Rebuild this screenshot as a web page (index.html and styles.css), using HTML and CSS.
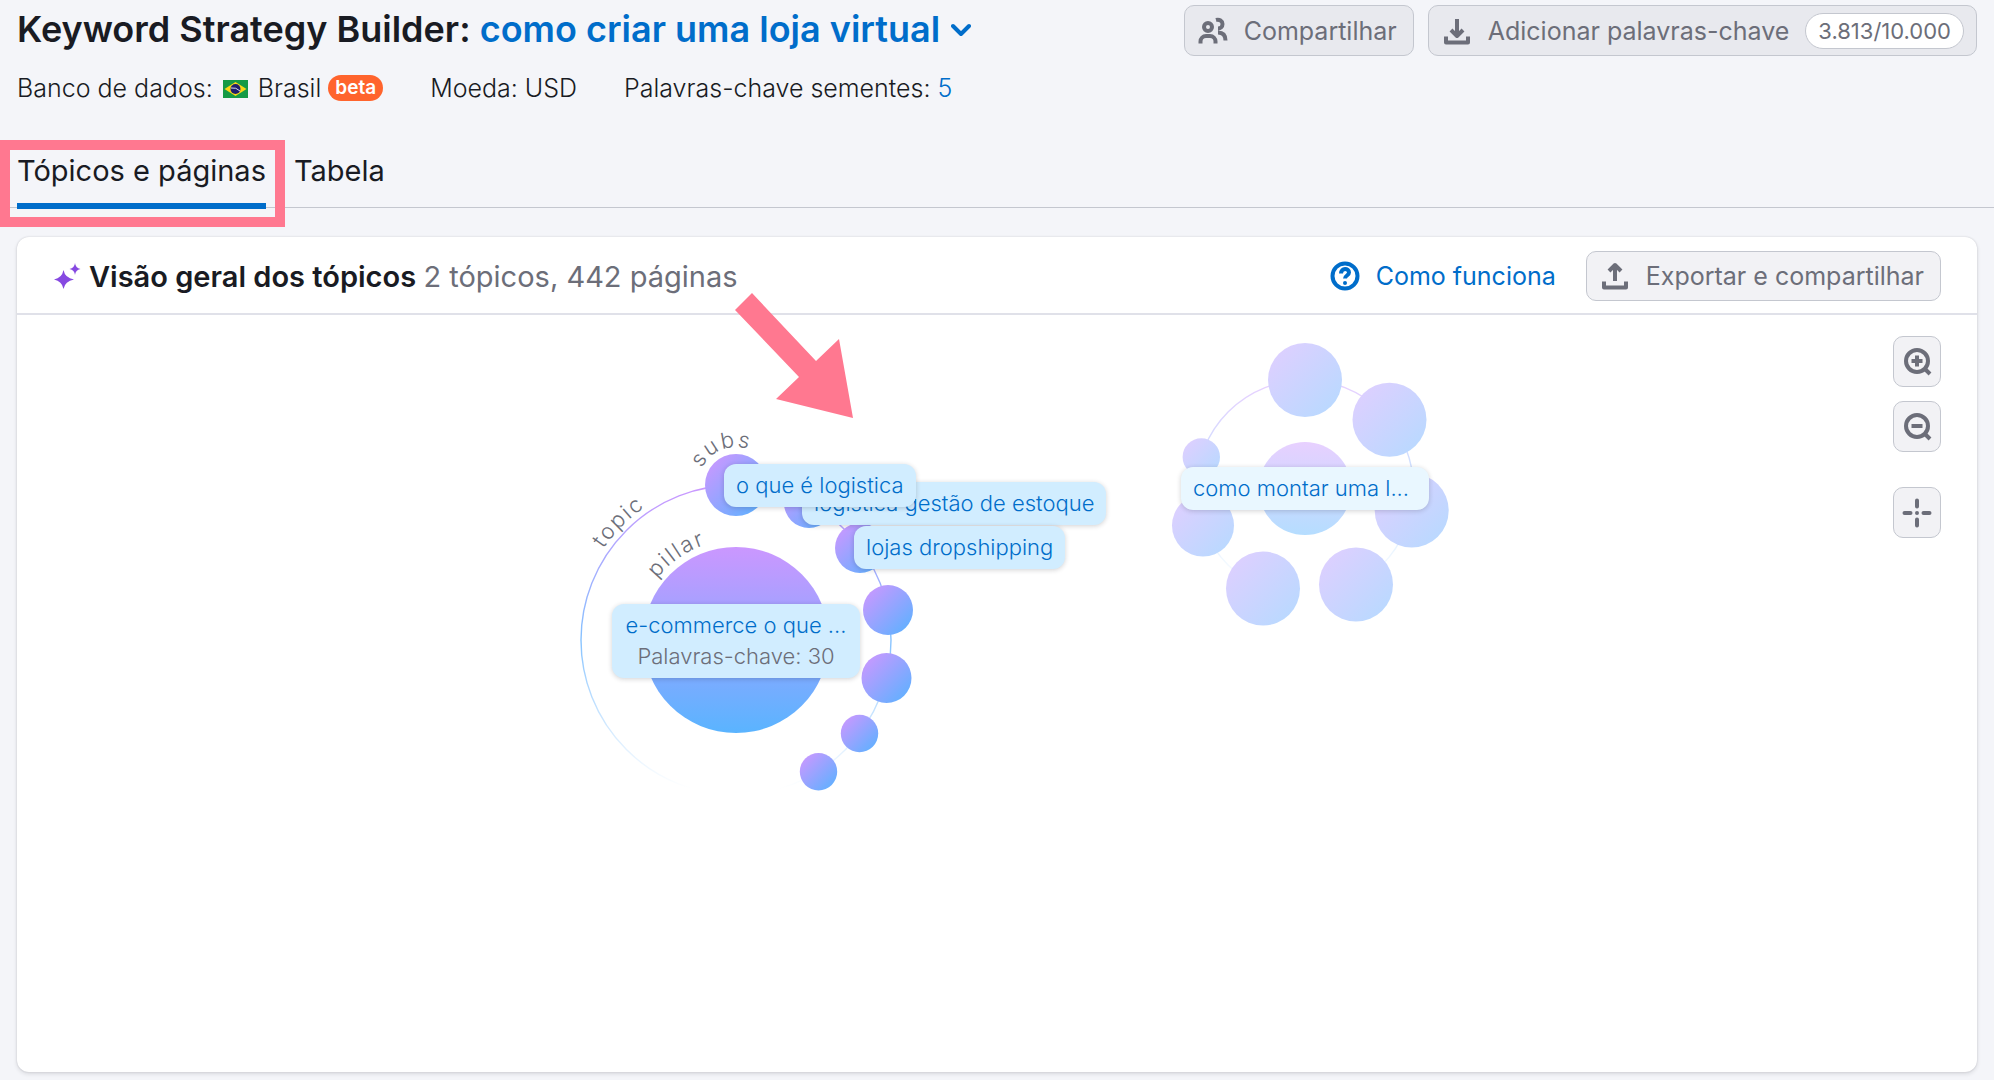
FILE: index.html
```html
<!DOCTYPE html>
<html lang="pt-BR">
<head>
<meta charset="utf-8">
<meta name="viewport" content="width=device-width, initial-scale=1">
<title>Keyword Strategy Builder</title>
<link rel="stylesheet" href="styles.css">
</head>
<body>
<header class="page-header">
  <div class="title-row">
    <h1 class="title">Keyword Strategy Builder:
      <button class="title-picker" type="button">como criar uma loja virtual
        <svg class="chevron" width="20" height="14" viewBox="0 0 20 14" aria-hidden="true"><path d="M2 3l8 8 8-8"/></svg>
      </button>
    </h1>
    <div class="actions">
      <button class="btn btn-dim" type="button">
        <svg class="icon" width="30" height="30" viewBox="0 0 30 30" aria-hidden="true"><circle cx="10" cy="11" r="4"/><path d="M2.500 27.500v-2a5.500 5.500 0 0 1 5.500-5.500h4a5.500 5.500 0 0 1 5.500 5.500v2M18 4c3.500-1 6.500 1 6.500 4s-2 4.500-4.500 4.500M20 16.500c5 0 7.500 2.500 7.500 8"/></svg>
        Compartilhar
      </button>
      <button class="btn btn-dim btn-counted" type="button">
        <svg class="icon" width="30" height="30" viewBox="0 0 30 30" aria-hidden="true"><path d="M15 3v15M9 14l6 6 6-6M4 20.500v6h22v-6"/></svg>
        Adicionar palavras-chave
        <span class="counter">3.813/10.000</span>
      </button>
    </div>
  </div>
  <div class="info-row">
    <div class="info">Banco de dados:
      <svg class="flag" width="25" height="18" viewBox="0 0 25 18" role="img" aria-label="Bandeira do Brasil"><rect width="25" height="18" fill="#159a46"/><path d="M1.500 9 12.500 2 23.500 9 12.500 16Z" fill="#f9d616"/><circle cx="12.500" cy="9" r="5" fill="#1f1e6c"/><path d="M8 8q5-1 9 3" fill="none" stroke="#d8dcee"/></svg>
      Brasil <span class="badge">beta</span></div>
    <div class="info">Moeda: USD</div>
    <div class="info">Palavras-chave sementes: <a href="#sementes">5</a></div>
  </div>
  <nav class="tabs">
    <a class="tab tab-active" href="#topicos">Tópicos e páginas</a>
    <a class="tab" href="#tabela">Tabela</a>
  </nav>
</header>

<main class="panel">
  <div class="panel-header">
    <svg class="sparkle" width="28" height="28" viewBox="0 0 28 28" aria-hidden="true"><path d="M10.500 8Q12 16 21 17.500 12 19 10.500 27 9 19 1 17.500 9 16 10.500 8ZM22 1Q22.500 6 27.500 7 22.500 8 22 13 21.500 8 16.500 7 21.500 6 22 1Z"/></svg>
    <h2 class="panel-title">Visão geral dos tópicos <span>2 tópicos, 442 páginas</span></h2>
    <a class="help" href="#como-funciona">
      <svg class="icon" width="30" height="30" viewBox="0 0 30 30" aria-hidden="true"><circle cx="15" cy="15" r="12.500"/><path d="M11 12.500c0-6 8-5.500 8-1 0 3-4 3-4 6"/><circle class="dot" cx="15" cy="22" r="2"/></svg>
      Como funciona</a>
    <button class="btn" type="button">
      <svg class="icon" width="30" height="30" viewBox="0 0 30 30" aria-hidden="true"><path d="M15 20V5M9 10l6-6 6 6M4 20.500v6h22v-6"/></svg>
      Exportar e compartilhar
    </button>
  </div>

  <div class="canvas">
    <div class="map">
      <svg class="graph" width="1000" height="500" viewBox="0 0 1000 500" aria-hidden="true">
        <defs>
          <linearGradient id="pillar" x1="0" y1="0" x2="0" y2="1"><stop offset="0" stop-color="#cb97ff"/><stop offset="1" stop-color="#5ab4ff"/></linearGradient>
          <linearGradient id="sub" x1="0.150" y1="0.150" x2="0.900" y2="0.900"><stop offset="0" stop-color="#c19aff"/><stop offset="1" stop-color="#62b0ff"/></linearGradient>
          <linearGradient id="sub-faded" x1="0.150" y1="0.150" x2="0.900" y2="0.900"><stop offset="0" stop-color="#dbd0ff"/><stop offset="1" stop-color="#b9d9ff"/></linearGradient>
          <linearGradient id="ring" x1="0" y1="0" x2="0" y2="1"><stop offset="0" stop-color="#cb97ff"/><stop offset="0.500" stop-color="#86c2ff"/><stop offset="0.980" stop-color="#9bd0ff" stop-opacity="0"/></linearGradient>
          <path id="arc-topic" d="M78 325A161 161 0 0 1 400 325"/>
          <path id="arc-pillar" d="M139 325A100 100 0 0 1 339 325"/>
          <path id="arc-subs" d="M201 170A38 38 0 0 1 277 170"/>
        </defs>
        <g>
          <circle class="ring" cx="239" cy="325" r="155"/>
          <circle fill="url(#pillar)" cx="239" cy="325" r="93"/>
          <g fill="url(#sub)">
            <circle cx="239" cy="170" r="31"/>
            <circle cx="312" cy="188" r="25"/>
            <circle cx="363" cy="233" r="25"/>
            <circle cx="391" cy="295" r="25"/>
            <circle cx="389.500" cy="363" r="25"/>
            <circle cx="362.500" cy="418.500" r="18.700"/>
            <circle cx="321.500" cy="456.700" r="18.700"/>
          </g>
        </g>
        <g class="arc-text">
          <text><textPath href="#arc-topic" startOffset="97">topic</textPath></text>
          <text><textPath href="#arc-pillar" startOffset="66">pillar</textPath></text>
          <text><textPath href="#arc-subs" startOffset="17">subs</textPath></text>
        </g>
        <circle class="ring faded" cx="808" cy="173.500" r="108.500"/>
        <circle class="faded" fill="url(#pillar)" cx="808" cy="173.500" r="46.500"/>
        <g fill="url(#sub-faded)">
          <circle cx="808" cy="65" r="37"/>
          <circle cx="892.500" cy="104.700" r="37"/>
          <circle cx="914.700" cy="195.500" r="37"/>
          <circle cx="859" cy="269.500" r="37"/>
          <circle cx="766" cy="273.500" r="37"/>
          <circle cx="706" cy="210.500" r="31"/>
          <circle cx="704.300" cy="142" r="18.700"/>
        </g>
        <path class="arrow" d="M255-22 319 46 342 24 356 103 279 84 302 62 238-5Z"/>
      </svg>
      <button class="label label-stock" type="button">logistica gestão de estoque</button>
      <button class="label label-logistics" type="button">o que é logistica</button>
      <button class="label label-drop" type="button">lojas dropshipping</button>
      <button class="label label-pillar" type="button">e-commerce o que ...<span>Palavras-chave: 30</span></button>
      <button class="label label-store" type="button">como montar uma l...</button>
    </div>
    <div class="tools">
      <button class="tool" type="button" aria-label="Aumentar zoom"><svg class="icon" width="30" height="30" viewBox="0 0 30 30" aria-hidden="true"><circle cx="15" cy="14" r="11"/><path d="M9.500 14h11M15 8.500v11M23 22l5 5"/></svg></button>
      <button class="tool" type="button" aria-label="Diminuir zoom"><svg class="icon" width="30" height="30" viewBox="0 0 30 30" aria-hidden="true"><circle cx="15" cy="14" r="11"/><path d="M9.500 14h11M23 22l5 5"/></svg></button>
      <button class="tool tool-center" type="button" aria-label="Centralizar"><svg class="icon icon-round" width="30" height="30" viewBox="0 0 30 30" aria-hidden="true"><path d="M15 2.500v6M15 21.500v6M2.500 15h6M21.500 15h6M15 15h0"/></svg></button>
    </div>
  </div>
</main>
</body>
</html>
```
FILE: styles.css
```css
:root {
  --ink: #191b23;
  --muted: #6c6e79;
  --link: #006dca;
  --line: #c4c7cf;
  --mark: #ff7890;
}

* {
  box-sizing: border-box;
}

body {
  margin: 0;
  min-height: 100vh;
  display: flex;
  flex-direction: column;
  background: #f4f5f9;
  color: var(--ink);
  font-family: Inter, "Liberation Sans", sans-serif;
  font-size: 25px;
}

button {
  font: inherit;
  cursor: pointer;
}

a {
  color: var(--link);
  text-decoration: none;
}

.title-row {
  display: flex;
  align-items: flex-start;
  justify-content: space-between;
  padding: 5px 17px 0;
}

.title {
  margin: 0;
  font-size: 36px;
  font-weight: 600;
  line-height: 48px;
}

.title-picker {
  padding: 0;
  border: 0;
  background: none;
  color: var(--link);
}

.chevron {
  margin-left: 2px;
  vertical-align: 5px;
  fill: none;
  stroke: currentColor;
  stroke-width: 4;
  stroke-linecap: round;
  stroke-linejoin: round;
}

.actions {
  display: flex;
  gap: 14px;
}

.btn {
  display: flex;
  align-items: center;
  gap: 16px;
  height: 50px;
  padding: 0 16px 0 13px;
  border: 1px solid var(--line);
  border-radius: 10px;
  background: #f2f2f5;
  color: var(--muted);
  white-space: nowrap;
}

.btn-dim {
  height: 51px;
  background: #e8e9ee;
}

.btn-counted {
  padding-right: 12px;
}

.icon {
  flex: none;
  fill: none;
  stroke: currentColor;
  stroke-width: 4;
  stroke-linejoin: round;
}

.icon-round {
  stroke-linecap: round;
}

.dot {
  fill: currentColor;
  stroke: none;
}

.counter {
  height: 36px;
  padding: 0 12px;
  border: 1px solid var(--line);
  border-radius: 18px;
  background: #fff;
  font-size: 22px;
  line-height: 34px;
}

.info-row {
  display: flex;
  gap: 47px;
  margin-top: 19px;
  padding: 0 17px;
  font-weight: 300;
  line-height: 26px;
}

.flag {
  margin: 0 3px;
  vertical-align: -1px;
}

.badge {
  display: inline-block;
  height: 26px;
  padding: 0 7px;
  border-radius: 13px;
  background: #ff642d;
  color: #fff;
  font-size: 19px;
  font-weight: 600;
  vertical-align: top;
}

.tabs {
  display: flex;
  gap: 28px;
  margin-top: 53px;
  padding: 0 17px;
  border-bottom: 1px solid var(--line);
}

.tab {
  position: relative;
  margin-bottom: -2px;
  padding-bottom: 15px;
  border-bottom: 6px solid transparent;
  color: var(--ink);
  font-size: 29px;
  line-height: 34px;
}

.tab-active {
  border-color: var(--link);
}

/* highlight frame around the current tab */
.tab-active::after {
  content: "";
  position: absolute;
  inset: -14px -19px -24px -17px;
  border: 10px solid var(--mark);
}

.panel {
  flex: 1;
  display: flex;
  flex-direction: column;
  margin: 29px 17px 8px;
  border-radius: 12px;
  background: #fff;
  box-shadow: 0 0 2px rgba(25, 27, 35, 0.16), 0 2px 4px rgba(25, 27, 35, 0.12);
}

.panel-header {
  display: flex;
  align-items: center;
  padding: 14px 36px 12px;
  border-bottom: 2px solid #e0e1e9;
}

.sparkle {
  margin-right: 8px;
  fill: #8649e1;
}

.panel-title {
  flex: 1;
  margin: 0;
  font-size: 29px;
  font-weight: 600;
}

.panel-title span {
  color: var(--muted);
  font-weight: 400;
}

.help {
  display: flex;
  align-items: center;
  gap: 16px;
  margin-right: 30px;
}

.canvas {
  flex: 1;
  position: relative;
}

.map {
  position: relative;
  width: 1000px;
  height: 500px;
  margin: 0 auto;
}

.graph {
  display: block;
  overflow: visible;
}

.ring {
  fill: none;
  stroke: url(#ring);
  stroke-width: 1.4;
}

.faded {
  opacity: 0.45;
}

.arc-text {
  fill: var(--muted);
  font-size: 22px;
  font-weight: 300;
  letter-spacing: 2px;
}

.arrow {
  fill: var(--mark);
}

.label {
  position: absolute;
  padding: 6px 12px;
  border: 0;
  border-radius: 12px;
  background: #d1edff;
  box-shadow: 0 1px 5px rgba(25, 27, 35, 0.2);
  color: var(--link);
  font-size: 22px;
  font-weight: 300;
  line-height: 31px;
  white-space: nowrap;
}

.label span {
  display: block;
  color: var(--muted);
}

.label-stock {
  left: 305px;
  top: 167px;
}

.label-logistics {
  left: 227px;
  top: 149px;
}

.label-drop {
  left: 357px;
  top: 211px;
}

.label-pillar {
  left: 115px;
  top: 289px;
  width: 248px;
}

.label-store {
  left: 684px;
  top: 152px;
  width: 248px;
  background: #e9f7ff;
  text-align: left;
}

.tools {
  position: absolute;
  top: 21px;
  right: 36px;
  display: grid;
  gap: 14px;
}

.tool {
  display: grid;
  place-items: center;
  width: 48px;
  height: 51px;
  padding: 0;
  border: 1px solid var(--line);
  border-radius: 10px;
  background: #f2f2f5;
  color: var(--muted);
}

.tool-center {
  margin-top: 21px;
}
```
